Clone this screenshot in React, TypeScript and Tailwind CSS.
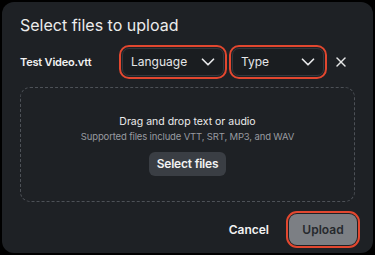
import { X, ChevronDown } from 'lucide-react'

function SelectBox({ label, width }: { label: string; width: string }) {
  return (
    <div className={['rounded-[10px] border-2 border-[#e2472f] p-px', width].join(' ')}>
      <div className="flex h-[28px] items-center justify-between rounded-[7px] border border-[#33373c] bg-[#1a1d20] pl-[8px] pr-[4px]">
        <span className="text-[12px] text-[#e6e7e8]">{label}</span>
        <ChevronDown size={22} strokeWidth={1.9} className="text-[#e6e7e8]" />
      </div>
    </div>
  )
}

export default function App() {
  return (
    <div className="h-[255px] w-[375px] bg-black p-[2px]" style={{ fontFamily: 'Inter, "Noto Sans", sans-serif' }}>
      <div className="h-[251px] w-[371px] overflow-hidden rounded-[12px] bg-[#1e2125] px-[18px] pt-[11px]">
        <h1 className="text-[16px] leading-6 text-[#ececec]">Select files to upload</h1>

        <div className="mt-[8px] flex items-center">
          <div className="w-[99px] text-[11px] font-semibold tracking-[-0.2px] text-[#f2f2f2]">Test Video.vtt</div>
          <SelectBox label="Language" width="w-[108px]" />
          <div className="ml-[2px]">
            <SelectBox label="Type" width="w-[98px]" />
          </div>
          <button className="flex flex-1 justify-center text-[#e6e7e8]">
            <X size={16} strokeWidth={2.2} />
          </button>
        </div>

        <div className="mt-[8px] flex h-[115px] flex-col items-center justify-center rounded-[10px] border border-dashed border-[#4d5157]">
          <p className="text-[10.5px] leading-4 text-[#ececec]">Drag and drop text or audio</p>
          <p className="text-[9.5px] leading-[14px] tracking-[-0.15px] text-[#989ba0]">Supported files include VTT, SRT, MP3, and WAV</p>
          <button className="mt-[8px] h-[24px] w-[77px] rounded-[6px] bg-[#3a3e44] text-[12px] font-semibold tracking-[-0.2px] text-[#f2f2f2]">
            Select files
          </button>
        </div>

        <div className="-mr-[5px] mt-[9px] flex items-center justify-end gap-[17px]">
          <button className="text-[12px] font-semibold text-[#f2f2f2]">Cancel</button>
          <div className="rounded-[11px] border-2 border-[#e2472f] p-px">
            <button className="h-[31px] w-[68px] rounded-[8px] bg-[#7c7f84] text-[12px] font-semibold text-[#26292d]">
              Upload
            </button>
          </div>
        </div>
      </div>
    </div>
  )
}
